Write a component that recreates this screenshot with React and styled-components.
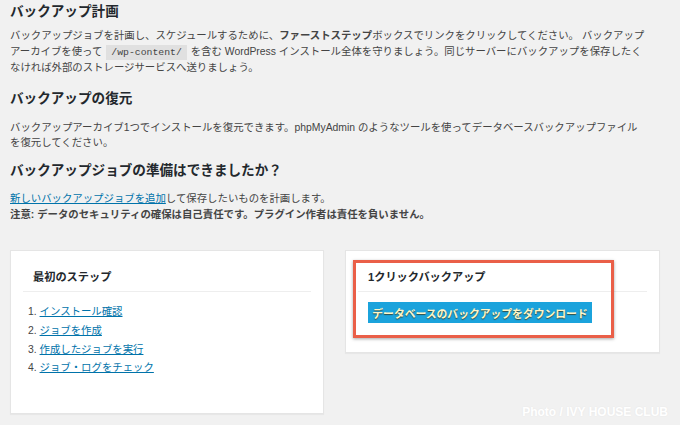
import styled, { createGlobalStyle } from "styled-components"

const GlobalStyle = createGlobalStyle`
  html, body {
    margin: 0;
    padding: 0;
    background: #f1f1f1;
  }
  body {
    width: 680px;
    height: 425px;
    overflow: hidden;
    font-family: "Liberation Sans", "Noto Sans CJK JP", sans-serif;
    color: #444;
    font-size: 10.4px;
    line-height: 15.6px;
  }
`

const App = () => {
  return (
    <Page>
      <GlobalStyle />
      <Heading $top={3}>バックアップ計画</Heading>
      <Text $top={7}>
        バックアップジョブを計画し、スケジュールするために、<b>ファーストステップ</b>ボックスでリンクをクリックしてください。 バックアップ
        <br />
        アーカイブを使って <Code>/wp-content/</Code> を含む WordPress インストール全体を守りましょう。同じサーバーにバックアップを保存したく
        <br />
        なければ外部のストレージサービスへ送りましょう。
      </Text>
      <Heading $top={14}>バックアップの復元</Heading>
      <Text $top={12}>
        バックアップアーカイブ1つでインストールを復元できます。phpMyAdmin のようなツールを使ってデータベースバックアップファイル
        <br />
        を復元してください。
      </Text>
      <Heading $top={11}>バックアップジョブの準備はできましたか？</Heading>
      <Text $top={11}>
        <Link href="#">新しいバックアップジョブを追加</Link>して保存したいものを計画します。
        <br />
        <b>注意: データのセキュリティの確保は自己責任です。プラグイン作者は責任を負いません。</b>
      </Text>

      <BoxRow>
        <Postbox $width={314} $height={164}>
          <BoxHeader>最初のステップ</BoxHeader>
          <StepList>
            <li><Link href="#">インストール確認</Link></li>
            <li><Link href="#">ジョブを作成</Link></li>
            <li><Link href="#">作成したジョブを実行</Link></li>
            <li><Link href="#">ジョブ・ログをチェック</Link></li>
          </StepList>
        </Postbox>
        <Postbox $width={315} $height={103}>
          <BoxHeader>1クリックバックアップ</BoxHeader>
          <BoxInside>
            <DownloadButton>データベースのバックアップをダウンロード</DownloadButton>
          </BoxInside>
          <Highlight />
        </Postbox>
      </BoxRow>

      <Watermark>Photo / IVY HOUSE CLUB</Watermark>
    </Page>
  )
}

const Page = styled.div`
  position: relative;
  height: 425px;
  padding: 0 0 0 10px;
  box-sizing: border-box;
`

const Heading = styled.h2`
  margin: ${(p) => p.$top}px 0 0;
  font-size: 13.6px;
  line-height: 18px;
  font-weight: 700;
  color: #23282d;
`

const Text = styled.p`
  margin: ${(p) => p.$top}px 0 0;
  width: 670px;
  white-space: nowrap;
`

const Code = styled.code`
  font-family: "Liberation Mono", "DejaVu Sans Mono", monospace;
  font-size: 9.8px;
  background: rgba(0, 0, 0, 0.07);
  padding: 2px 5px 2px;
  margin: 0 1px;
`

const Link = styled.a`
  color: #0073aa;
  text-decoration: underline;
`

const BoxRow = styled.div`
  display: flex;
  align-items: flex-start;
  gap: 21px;
  margin-top: 28px;
`

const Postbox = styled.div`
  position: relative;
  width: ${(p) => p.$width}px;
  height: ${(p) => p.$height}px;
  box-sizing: border-box;
  background: #fff;
  border: 1px solid #e5e5e5;
  box-shadow: 0 1px 1px rgba(0, 0, 0, 0.04);
  padding: 0 12px;
`

const BoxHeader = styled.h3`
  margin: 0;
  padding: 17px 0 5px 10px;
  font-size: 11.2px;
  line-height: 18px;
  font-weight: 700;
  color: #23282d;
  border-bottom: 1px solid #eee;
`

const StepList = styled.ol`
  margin: 11px 0 0;
  padding: 0 0 0 5px;
  list-style-position: inside;
  color: #444;

  li {
    line-height: 18.7px;
  }
`

const BoxInside = styled.div`
  padding: 10px 0 0 10px;
`

const DownloadButton = styled.button`
  display: block;
  height: 21px;
  width: 224px;
  padding: 0;
  border: none;
  background: #1ba3dc;
  color: #fff6c8;
  font-family: "Liberation Sans", "Noto Sans CJK JP", sans-serif;
  font-size: 10.8px;
  font-weight: 700;
  text-shadow: 0 1px 1px rgba(60, 40, 0, 0.7);
`

const Highlight = styled.div`
  position: absolute;
  left: 7px;
  top: 9px;
  width: 261px;
  height: 78px;
  box-sizing: border-box;
  border: 3px solid #ea5f48;
  box-shadow: 0 1px 3px rgba(0, 0, 0, 0.35);
`

const Watermark = styled.div`
  position: absolute;
  right: 12px;
  bottom: 7px;
  font-family: "Liberation Sans", sans-serif;
  font-size: 12px;
  font-weight: 700;
  color: #fff;
  text-shadow: 0 0 2px rgba(0, 0, 0, 0.06);
`

export default App
